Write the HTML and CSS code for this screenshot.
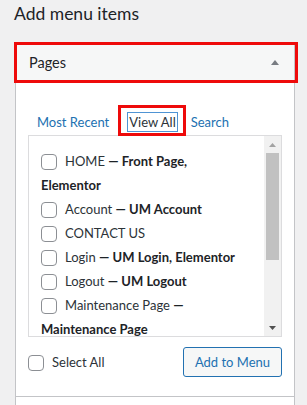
FILE: index.html
```html
<!DOCTYPE html>
<html>
<head>
<meta charset="utf-8">
<link rel="stylesheet" href="styles.css">
</head>
<body>
<h2 class="title">Add menu items</h2>
<div class="accordion">
  <div class="section">
    <div class="section-head">
      <span class="section-title">Pages</span>
      <svg class="arrow" width="8" height="5" viewBox="0 0 8 5"><path d="M0 5 L4 0 L8 5 Z" fill="#787c82"/></svg>
      <span class="mark mark-head"></span>
    </div>
    <div class="section-body">
      <div class="tabs">
        <span class="tab tab-recent">Most Recent</span>
        <span class="tab tab-active">View All<span class="mark mark-tab"></span></span>
        <span class="tab">Search</span>
      </div>
      <div class="listbox">
        <ul class="checklist">
          <li><span class="cb"></span>HOME <span class="state">— Front Page, Elementor</span></li>
          <li><span class="cb"></span>Account <span class="state">— UM Account</span></li>
          <li><span class="cb"></span>CONTACT US</li>
          <li><span class="cb"></span>Login <span class="state">— UM Login, Elementor</span></li>
          <li><span class="cb"></span>Logout <span class="state">— UM Logout</span></li>
          <li><span class="cb"></span>Maintenance Page <span class="state">— Maintenance Page</span></li>
        </ul>
        <div class="scrollbar">
          <div class="sb-btn"><svg width="7" height="4" viewBox="0 0 7 4"><path d="M0 4 L3.5 0 L7 4 Z" fill="#a3a3a3"/></svg></div>
          <div class="sb-track"><div class="sb-thumb"></div></div>
          <div class="sb-btn"><svg width="7" height="4" viewBox="0 0 7 4"><path d="M0 0 L3.5 4 L7 0 Z" fill="#505050"/></svg></div>
        </div>
      </div>
      <div class="actions">
        <label class="select-all"><span class="cb"></span>Select All</label>
        <button class="add-btn">Add to Menu</button>
      </div>
    </div>
  </div>
  <div class="section next"></div>
</div>
</body>
</html>
```

FILE: styles.css
```css
html, body {
  margin: 0;
  padding: 0;
}
body {
  background: #f0f0f1;
  font-family: Lato, "Noto Sans", sans-serif;
  color: #1d2327;
  width: 307px;
  height: 405px;
  overflow: hidden;
}
.title {
  margin: 0;
  padding: 3px 0 17px 14px;
  font-size: 17.5px;
  line-height: 22px;
  font-weight: 400;
  color: #1d2327;
}
.accordion {
  margin-left: 15px;
  width: 280px;
}
.section {
  background: #fff;
  border: 1px solid #c3c4c7;
  border-top-color: #dcdcde;
}
.section-head {
  position: relative;
  height: 39px;
  background: #f6f7f7;
  border-bottom: 1px solid #dcdcde;
  display: flex;
  align-items: center;
  justify-content: space-between;
  padding: 0 15px 0 13px;
}
.section-title {
  font-size: 14.5px;
  color: #1d2327;
}
.mark {
  position: absolute;
  border: 3px solid #ee0a0a;
  pointer-events: none;
}
.mark-head {
  left: -2px;
  right: -4px;
  top: -1px;
  bottom: -1px;
}
.section-body {
  padding: 29px 12px 19px 12px;
}
.tabs {
  display: flex;
  margin-left: 7px;
  margin-bottom: 3px;
}
.tab {
  position: relative;
  font-size: 13px;
  line-height: 18px;
  padding: 0 1px;
  border: 1px solid transparent;
  color: #2271b1;
}
.tab-recent {
  margin-right: 16px;
}
.tab-active {
  border-color: #4f94d4;
  color: #2c3338;
  margin-right: 11px;
}
.mark-tab {
  left: -10px;
  right: -9px;
  top: -8px;
  bottom: -5px;
}
.listbox {
  display: flex;
  height: 200px;
  border: 1px solid #dcdcde;
  background: #fff;
}
.checklist {
  flex: 1;
  margin: 0;
  list-style: none;
  padding: 13px 17px 0 12px;
  overflow: hidden;
}
.checklist li {
  font-size: 13px;
  line-height: 24px;
  color: #2c3338;
}
.state {
  font-weight: 700;
  color: #1d2327;
}
.cb {
  display: inline-block;
  box-sizing: border-box;
  width: 16px;
  height: 16px;
  border: 1px solid #8c8f94;
  border-radius: 4px;
  background: #fff;
  vertical-align: -4px;
  margin-right: 8px;
}
.scrollbar {
  width: 17px;
  background: #f1f1f1;
  display: flex;
  flex-direction: column;
}
.sb-btn {
  height: 17px;
  display: flex;
  align-items: center;
  justify-content: center;
}
.sb-track {
  flex: 1;
  padding: 0 2px;
}
.sb-thumb {
  height: 107px;
  background: #c1c1c1;
}
.actions {
  display: flex;
  align-items: center;
  justify-content: space-between;
  margin-top: 10px;
}
.select-all {
  font-size: 13px;
  color: #2c3338;
  line-height: 24px;
}
.add-btn {
  font-family: inherit;
  font-size: 13px;
  height: 30px;
  padding: 0 11px;
  border: 1px solid #2271b1;
  border-radius: 3px;
  background: #f6f7f7;
  color: #2271b1;
}
.next {
  height: 8px;
  border-top: none;
  border-bottom: none;
}
```
